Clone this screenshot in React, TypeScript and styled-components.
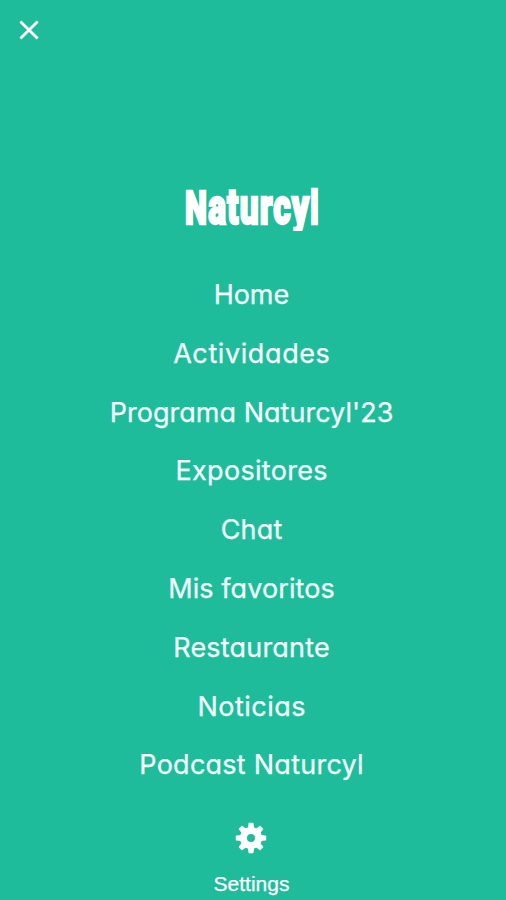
import React from "react";
import styled, { createGlobalStyle } from "styled-components";

const GlobalStyle = createGlobalStyle`
  body {
    margin: 0;
    background: #1fbc9c;
  }
`;

const Screen = styled.main`
  box-sizing: border-box;
  width: 506px;
  height: 900px;
  overflow: hidden;
  display: flex;
  flex-direction: column;
  align-items: center;
  background: #1fbc9c;
  color: #fff;
  font-family: Inter, "Liberation Sans", sans-serif;
`;

const TopBar = styled.header`
  box-sizing: border-box;
  width: 100%;
  height: 177px;
  padding: 19px 18px;
`;

const IconButton = styled.button`
  display: block;
  padding: 0;
  border: 0;
  background: none;
  color: inherit;
  line-height: 0;
`;

const Title = styled.h1`
  margin: 0;
  height: 89px;
  font: 900 50.5px/60px Roboto, sans-serif;
  white-space: nowrap;
  letter-spacing: 1.6px;
  transform: translateX(-1.5px) scaleX(0.665);
  clip-path: inset(0 -10px 35px);
  -webkit-text-stroke: 2.4px #fff;

  &::first-letter {
    font-size: 47px;
  }
`;

const Ascender = styled.span`
  font-size: 46px;
  letter-spacing: 0;
`;

const Menu = styled.nav`
  display: flex;
  flex-direction: column;
  align-items: center;
  margin-right: 3px;
`;

const MenuItem = styled.a<{ $tracking: number }>`
  height: 58.8px;
  color: #f4fffc;
  font-size: 27px;
  font-weight: 400;
  line-height: 58.8px;
  white-space: nowrap;
  font-feature-settings: "cv11" 1;
  letter-spacing: ${(p) => p.$tracking}px;
  margin-right: ${(p) => -p.$tracking}px;
  -webkit-text-stroke: 0.25px #f4fffc;
`;

const Settings = styled.button`
  display: flex;
  flex-direction: column;
  align-items: center;
  gap: 17px;
  margin: 27px 3px 0 0;
  padding: 0;
  border: 0;
  background: none;
  color: inherit;
  font: 21px/26px "Liberation Sans", Arial, sans-serif;
  -webkit-text-stroke: 0.25px #fff;
`;

const items = [
  { label: "Home", tracking: -0.1 },
  { label: "Actividades", tracking: 0.6 },
  { label: "Programa Naturcyl'23", tracking: 0.03 },
  { label: "Expositores", tracking: 0.3 },
  { label: "Chat", tracking: 0.2 },
  { label: "Mis favoritos", tracking: 0.1 },
  { label: "Restaurante", tracking: 0.2 },
  { label: "Noticias", tracking: 0.5 },
  { label: "Podcast Naturcyl", tracking: 0.25 },
];

function CloseIcon() {
  return (
    <svg width="22" height="22" viewBox="0 0 22 22" fill="none" stroke="currentColor" strokeWidth="2.8">
      <path d="M2.4 2.4 19.6 19.6M19.6 2.4 2.4 19.6" />
    </svg>
  );
}

function GearIcon() {
  return (
    <svg width="32" height="32" viewBox="-16 -16 32 32">
      <circle r="7.5" fill="none" stroke="currentColor" strokeWidth="7" />
      {[0, 45, 90, 135, 180, 225, 270, 315].map((angle) => (
        <path
          key={angle}
          d="M-3.1 -9.5 -2.5 -14.6Q-2.4 -15.2 -1.8 -15.2H1.8Q2.4 -15.2 2.5 -14.6L3.1 -9.5Z"
          fill="currentColor"
          transform={`rotate(${angle})`}
        />
      ))}
    </svg>
  );
}

export default function App() {
  return (
    <Screen>
      <GlobalStyle />
      <TopBar>
        <IconButton aria-label="Close">
          <CloseIcon />
        </IconButton>
      </TopBar>
      <Title>
        Naturcy<Ascender>l</Ascender>
      </Title>
      <Menu>
        {items.map((item) => (
          <MenuItem key={item.label} $tracking={item.tracking}>
            {item.label}
          </MenuItem>
        ))}
      </Menu>
      <Settings>
        <GearIcon />
        Settings
      </Settings>
    </Screen>
  );
}
